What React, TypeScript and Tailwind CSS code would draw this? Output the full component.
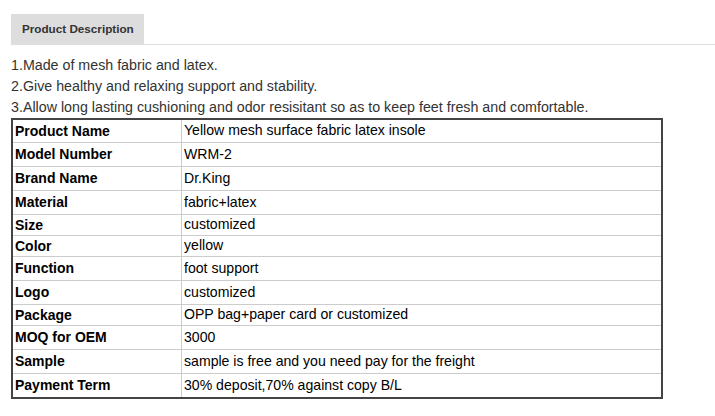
const specs: { label: string; value: string; h: string }[] = [
  { label: 'Product Name', value: 'Yellow mesh surface fabric latex insole', h: 'h-[23px]' },
  { label: 'Model Number', value: 'WRM-2', h: 'h-[24px]' },
  { label: 'Brand Name', value: 'Dr.King', h: 'h-[24px]' },
  { label: 'Material', value: 'fabric+latex', h: 'h-[24px]' },
  { label: 'Size', value: 'customized', h: 'h-[21px]' },
  { label: 'Color', value: 'yellow', h: 'h-[21px]' },
  { label: 'Function', value: 'foot support', h: 'h-[24px]' },
  { label: 'Logo', value: 'customized', h: 'h-[24px]' },
  { label: 'Package', value: 'OPP bag+paper card or customized', h: 'h-[21px]' },
  { label: 'MOQ for OEM', value: '3000', h: 'h-[24px]' },
  { label: 'Sample', value: 'sample is free and you need pay for the freight', h: 'h-[24px]' },
  { label: 'Payment Term', value: '30% deposit,70% against copy B/L', h: 'h-[23px]' },
]

const features = [
  '1.Made of mesh fabric and latex.',
  '2.Give healthy and relaxing support and stability.',
  '3.Allow long lasting cushioning and odor resisitant so as to keep feet fresh and comfortable.',
]

export default function App() {
  return (
    <div className="h-[416px] w-[715px] overflow-hidden bg-white pt-[14px] font-['Liberation_Sans',Arial,sans-serif]">
      <div className="ml-[11px] flex border-b border-[#ddd]">
        <div className="flex h-[30px] w-[133px] items-center bg-[#ddd] pl-[11px] text-[11.7px] font-bold text-[#333]">
          Product Description
        </div>
      </div>

      <div className="mt-[10px] pl-[11px]">
        {features.map((line) => (
          <p key={line} className="text-[14.25px] leading-[21px] text-[#333]">
            {line}
          </p>
        ))}

        <div className="w-[652px] border-2 border-[#444]">
          {specs.map((row, i) => (
            <div
              key={row.label}
              className={`flex ${row.h} ${i < specs.length - 1 ? 'border-b border-[#ccc]' : ''}`}
            >
              <div className="flex w-[169px] items-center border-r border-[#ccc] pl-[2px] text-[14px] font-bold text-black">
                {row.label}
              </div>
              <div className="flex flex-1 items-center pl-[2px] text-[14.1px] text-black">{row.value}</div>
            </div>
          ))}
        </div>
      </div>
    </div>
  )
}
